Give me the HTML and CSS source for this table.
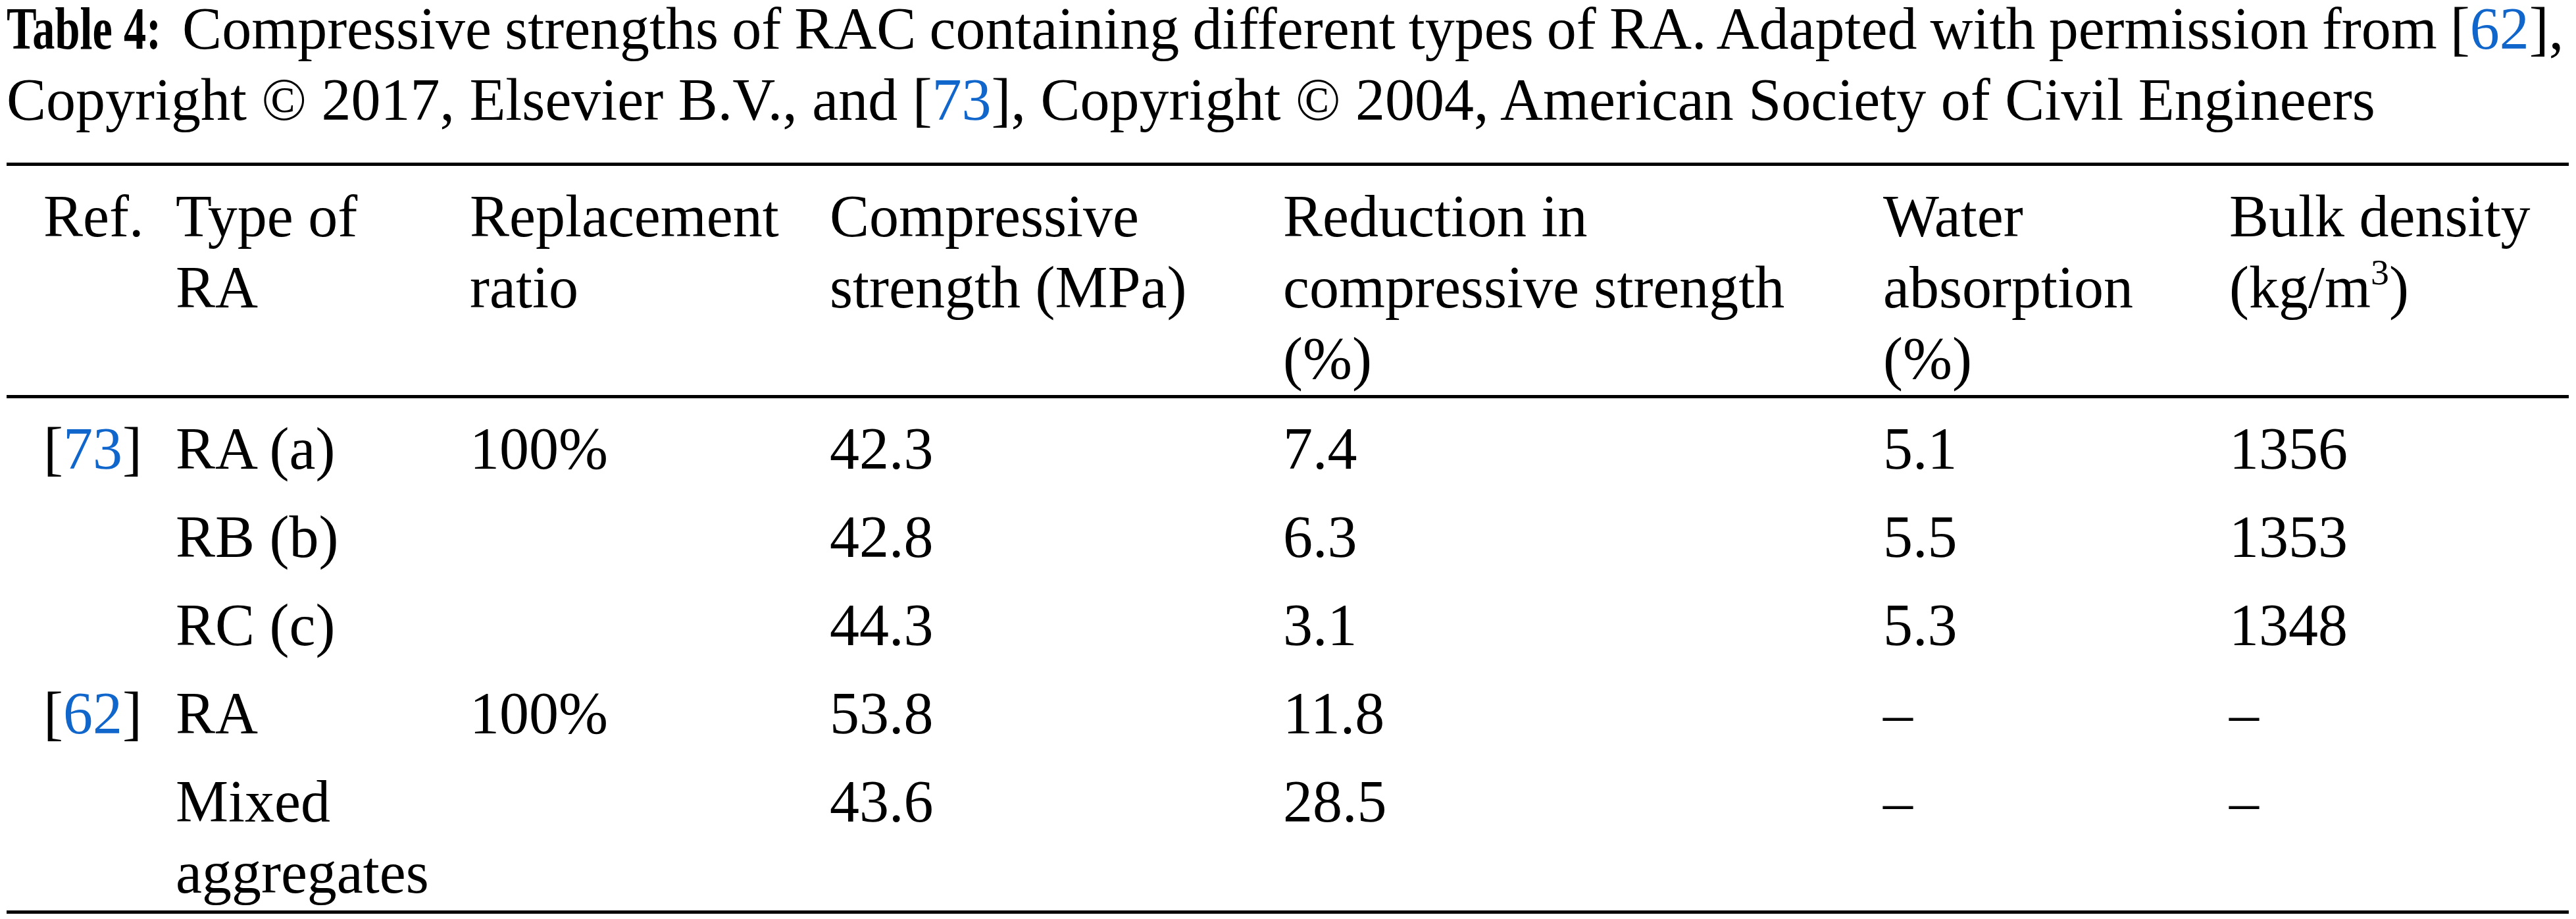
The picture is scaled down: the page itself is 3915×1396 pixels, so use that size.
FILE: index.html
```html
<!DOCTYPE html>
<html lang="en">
<head>
<meta charset="utf-8">
<title>Table 4</title>
<link rel="stylesheet" href="styles.css">
</head>
<body>
<div class="page">
  <p class="caption"><span class="line1"><b class="label">Table 4:</b> Compressive strengths of RAC containing different types of RA. Adapted with permission from [<a class="ref">62</a>],</span><br>Copyright © 2017, Elsevier B.V., and [<a class="ref">73</a>], Copyright © 2004, American Society of Civil Engineers</p>
  <table class="data">
    <colgroup>
      <col class="c1"><col class="c2"><col class="c3"><col class="c4"><col class="c5"><col class="c6"><col class="c7">
    </colgroup>
    <thead>
      <tr>
        <th class="first">Ref.</th>
        <th>Type of RA</th>
        <th>Replacement ratio</th>
        <th>Compressive strength (MPa)</th>
        <th>Reduction in compressive strength (%)</th>
        <th>Water absorption (%)</th>
        <th>Bulk density (kg/m<sup class="sup">3</sup>)</th>
      </tr>
    </thead>
    <tbody>
      <tr>
        <td class="first">[<a class="ref">73</a>]</td>
        <td>RA (a)</td>
        <td>100%</td>
        <td>42.3</td>
        <td>7.4</td>
        <td>5.1</td>
        <td>1356</td>
      </tr>
      <tr>
        <td class="first"></td>
        <td>RB (b)</td>
        <td></td>
        <td>42.8</td>
        <td>6.3</td>
        <td>5.5</td>
        <td>1353</td>
      </tr>
      <tr>
        <td class="first"></td>
        <td>RC (c)</td>
        <td></td>
        <td>44.3</td>
        <td>3.1</td>
        <td>5.3</td>
        <td>1348</td>
      </tr>
      <tr>
        <td class="first">[<a class="ref">62</a>]</td>
        <td>RA</td>
        <td>100%</td>
        <td>53.8</td>
        <td>11.8</td>
        <td>–</td>
        <td>–</td>
      </tr>
      <tr>
        <td class="first"></td>
        <td>Mixed aggregates</td>
        <td></td>
        <td>43.6</td>
        <td>28.5</td>
        <td>–</td>
        <td>–</td>
      </tr>
    </tbody>
  </table>
</div>
</body>
</html>
```

FILE: styles.css
```css
html, body {
  margin: 0;
  padding: 0;
  background: #ffffff;
}

.page {
  padding: 0 11px 0 10px;
  font-family: "Liberation Serif", "Times New Roman", serif;
  font-size: 90px;
  line-height: 108px;
  color: #000000;
}

.caption {
  margin: -10px -11px 0 0;
  padding-left: 0;
  white-space: nowrap;
}

.line1 {
  word-spacing: -2.4px;
}

.label {
  display: inline-block;
  width: 247px;
  font-weight: bold;
  word-spacing: 0;
  transform: scaleX(0.76);
  transform-origin: 0 50%;
  white-space: nowrap;
}

.ref {
  color: #1166cc;
  text-decoration: none;
}

.data {
  width: 3894px;
  table-layout: fixed;
  border-collapse: separate;
  border-spacing: 0;
  margin-top: 41px;
  border-top: 5px solid #000;
  border-bottom: 5px solid #000;
}

.c1 { width: 257px; }
.c2 { width: 447px; }
.c3 { width: 547px; }
.c4 { width: 689px; }
.c5 { width: 912px; }
.c6 { width: 526px; }
.c7 { width: 516px; }

.data th,
.data td {
  box-sizing: border-box;
  text-align: left;
  vertical-align: top;
  font-weight: normal;
  padding: 23px 30px 3px 0;
}

.data th {
  padding-bottom: 1px;
  border-bottom: 5px solid #000;
}

.data .first {
  padding-left: 56px;
  padding-right: 0;
}

.sup {
  font-size: 0.62em;
  line-height: 0;
  vertical-align: 0.62em;
}
```
